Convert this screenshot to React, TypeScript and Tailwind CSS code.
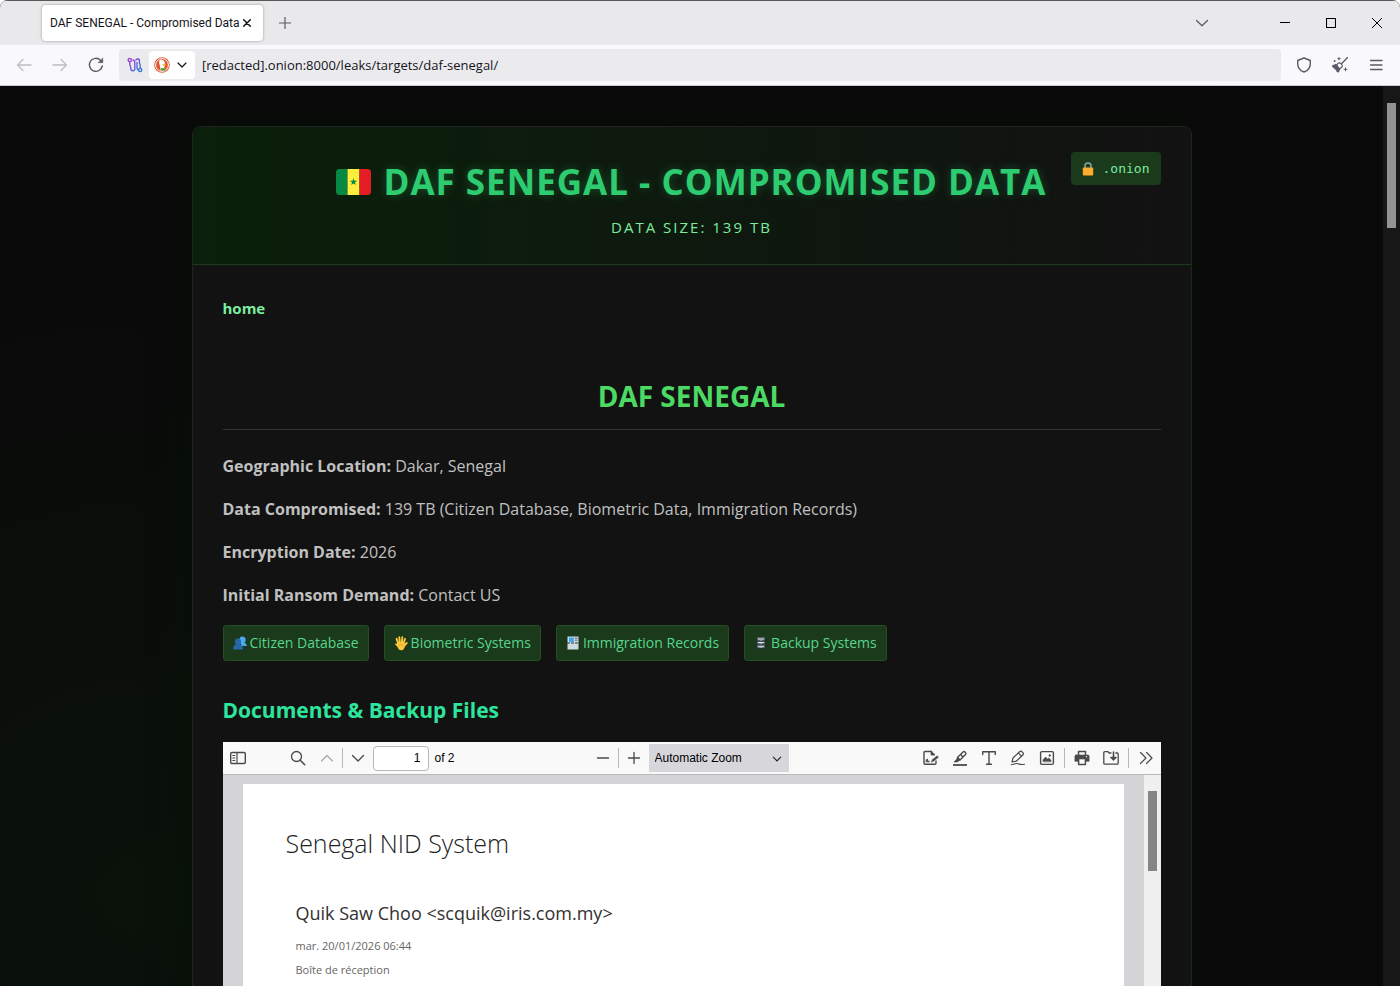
import React from "react";

const ui = "font-['Open_Sans','Noto_Sans',sans-serif]";

type IconProps = { children: React.ReactNode; size?: string; box?: string; className?: string };

function Icon({ children, size = "size-4", box = "0 0 16 16", className = "" }: IconProps) {
  return (
    <svg
      viewBox={box}
      className={`${size} shrink-0 ${className}`}
      fill="none"
      stroke="currentColor"
      strokeWidth="1.2"
      strokeLinecap="round"
      strokeLinejoin="round"
      aria-hidden="true"
    >
      {children}
    </svg>
  );
}

function Flag() {
  return (
    <svg viewBox="0 0 35 26" className="h-[26px] w-[35px] shrink-0" role="img" aria-label="Flag of Senegal">
      <clipPath id="flag">
        <rect width="35" height="26" rx="3.5" />
      </clipPath>
      <g clipPath="url(#flag)">
        <rect width="11.5" height="26" fill="#068a43" />
        <rect x="11.5" width="12" height="26" fill="#fdee3d" />
        <rect x="23.500" width="11.5" height="26" fill="#e41c24" />
        <path d="M17.500 9l.9 2.700h2.800l-2.250 1.700.85 2.700-2.300-1.650-2.300 1.650.85-2.700-2.250-1.700h2.800z" fill="#068a43" />
      </g>
    </svg>
  );
}

function People() {
  return (
    <svg viewBox="0 0 14 14" className="size-3.5 shrink-0" aria-hidden="true">
      <path d="M9.500.5c2 0 3.200 1.300 3.200 3.200 0 1.500-.6 2.500-1.200 3.100 1.300.5 2.300 1.200 2.300 3.200H8.500L6.500 5C6 2.500 7 .5 9.500.5z" fill="#4aa8ee" />
      <path d="M5 2.500c2 0 3 1.200 3 3.100 0 1.300-.5 2.400-1.200 3 2 .6 3.200 1.400 3.200 4.900H.2c0-3.500 1-4.300 2.900-4.900-.7-.6-1.200-1.700-1.200-3C1.900 3.700 3 2.500 5 2.500z" fill="#2668a4" />
    </svg>
  );
}

function Hand() {
  return (
    <svg viewBox="0 0 14 15" className="h-[15px] w-3.5 shrink-0" aria-hidden="true">
      <g stroke="#fdc93c" strokeWidth="1.9" strokeLinecap="round" fill="none">
        <path d="M4.500 8L2.600 2.800M6 7.500L5.300 1.300M7.800 7.500L8.300 1.300M9.300 8L11 3M9.500 10.500L12.700 7" />
      </g>
      <path d="M3.600 6.500h6.600l1 3.500-1.700 3.600c-1 .9-3.500 1-4.600 0L3.300 10.800 1 8.300c.2-1 1-1 1.700-.5z" fill="#fdc93c" />
      <path d="M4.500 9.500c2-1.200 4-1 5.500.5" stroke="#f19020" strokeWidth=".8" fill="none" />
    </svg>
  );
}

function Card() {
  return (
    <svg viewBox="-1 0 14 14" className="size-3.5 shrink-0" aria-hidden="true">
      <rect x=".5" y=".5" width="11" height="13" fill="#cdd8df" />
      <rect x="2" y="1.500" width="5" height="4.500" fill="#46a7ec" />
      <path d="M8 2.200h2.500M8 4.200h2.500" stroke="#54636c" strokeWidth="1" />
      <path d="M0 7h12" stroke="#26343c" strokeWidth="1.200" strokeDasharray="3 1" />
    </svg>
  );
}

function Cabinet() {
  return (
    <svg viewBox="-1 0 14 14" className="size-3.5 shrink-0" aria-hidden="true">
      <path d="M2 1h8v12H2z" fill="#56606c" />
      <path d="M3 2.500h6v1H3zM3 6h6v1H3zM3 9.700h6v1H3z" fill="#dfe6ee" />
      <path d="M2 5h8M2 8.700h8M2 12.500h8" stroke="#252c35" strokeWidth=".9" />
      <path d="M4.500 4.200h3M4.500 7.800h3M4.500 11.500h3" stroke="#a9b5c2" strokeWidth=".8" />
    </svg>
  );
}

function Lock() {
  return (
    <svg viewBox="0 0 12 14" className="h-3.5 w-3 shrink-0" aria-hidden="true">
      <path d="M3 7V4a3 3 0 0 1 6 0v3" fill="none" stroke="#8fa3b0" strokeWidth="1.500" />
      <rect x=".8" y="5.500" width="10.400" height="8" rx="1" fill="#ffab2e" />
    </svg>
  );
}

function TabStrip() {
  return (
    <div className="flex h-[45px] items-center border-t border-[#5c5558] bg-[#e9e9eb] pl-[42px] text-[#15141a]">
      <div className="flex h-9 w-[221px] items-center rounded bg-white pl-2 shadow-[0_0_3px_rgba(0,0,0,0.35)]">
        <span className="whitespace-nowrap font-[Roboto,'Open_Sans',sans-serif] text-[12px]">DAF SENEGAL - Compromised Data</span>
        <button type="button" aria-label="Close tab" className="ml-auto mr-3">
          <Icon size="size-2" box="0 0 8 8">
            <path d="M.7.700l6.600 6.600M7.300.7L.7 7.300" strokeWidth="1.500" />
          </Icon>
        </button>
      </div>
      <button type="button" aria-label="New tab" className="ml-4 text-[#5b5b66]">
        <Icon size="size-3" box="0 0 12 12">
          <path d="M6 .5v11M.5 6h11" />
        </Icon>
      </button>
      <div className="ml-auto flex items-center">
        <button type="button" aria-label="List all tabs" className="mr-[72px] text-[#5b5b66]">
          <Icon size="size-3" box="0 0 12 12">
            <path d="M.5 3.500L6 8.800l5.500-5.300" strokeWidth="1.300" />
          </Icon>
        </button>
        <div className="flex gap-9 pr-[18px] text-black">
          <button type="button" aria-label="Minimize">
            <Icon size="size-2.5" box="0 0 10 10">
              <path d="M0 4.500h10" strokeWidth="1" />
            </Icon>
          </button>
          <button type="button" aria-label="Maximize">
            <Icon size="size-2.5" box="0 0 10 10">
              <path d="M.5.500h9v9h-9z" strokeWidth="1.100" strokeLinejoin="miter" />
            </Icon>
          </button>
          <button type="button" aria-label="Close">
            <Icon size="size-2.5" box="0 0 10 10">
              <path d="M.3.300l9.400 9.400M9.700.3L.3 9.700" strokeWidth="1" />
            </Icon>
          </button>
        </div>
      </div>
    </div>
  );
}

function NavBar() {
  return (
    <div className="flex h-[41px] items-center border-b border-[#cccccf] bg-[#f9f9fb] px-4 text-[#5b5b66]">
      <div className="flex items-center gap-5">
        <button type="button" aria-label="Back" className="text-[#bdbdc2]">
          <Icon>
            <path d="M15 8H1.500M7 2.500L1.500 8 7 13.500" strokeWidth="1.300" />
          </Icon>
        </button>
        <button type="button" aria-label="Forward" className="text-[#bdbdc2]">
          <Icon>
            <path d="M1 8h13.500M9 2.500L14.500 8 9 13.500" strokeWidth="1.300" />
          </Icon>
        </button>
        <button type="button" aria-label="Reload">
          <Icon>
            <path d="M14.300 9A6.500 6.500 0 1 1 12.500 3.200L14 4.700" strokeWidth="1.400" />
            <path d="M14.800 1.200v4.500h-4.500z" fill="currentColor" strokeWidth=".5" />
          </Icon>
        </button>
      </div>
      <div className="ml-[15px] flex h-8 min-w-0 flex-1 items-center rounded bg-[#ebebee]">
        <button type="button" aria-label="Circuit" className="ml-2">
          <svg viewBox="0 0 16 16" className="size-4" fill="none" strokeWidth="1.400" aria-hidden="true">
            <defs>
              <linearGradient id="circuit" gradientUnits="userSpaceOnUse" x1="1" y1="1" x2="15" y2="15">
                <stop offset="0" stopColor="#b833e1" />
                <stop offset="1" stopColor="#1b86d0" />
              </linearGradient>
            </defs>
            <g stroke="url(#circuit)">
              <circle cx="2.800" cy="3" r="1.600" />
              <circle cx="13.200" cy="13" r="1.600" />
              <path d="M2.800 4.600v2.600c0 1.500 1 2 1 3.300v1.300a2 2 0 0 0 4 0V5.500c0-1.700-.8-2.500-2.300-2.500" />
              <path d="M13.200 11.400V8.800c0-1.500-.8-2-.8-3.300V4.200a1.800 1.800 0 0 0-3.600-.7" />
              <path d="M10 5v5.500c0 1.500.5 2.300 1.500 2.500" />
            </g>
          </svg>
        </button>
        <button type="button" aria-label="Search engine" className="ml-1.5 flex h-7 w-[46px] items-center gap-[7px] rounded-sm bg-white pl-[5px]">
          <svg viewBox="0 0 16 16" className="size-4" aria-hidden="true">
            <circle cx="8" cy="8" r="7.800" fill="#de5833" />
            <circle cx="8" cy="8" r="6.400" fill="none" stroke="#fff" strokeWidth="1" />
            <path d="M6 3c2.500-.8 5 .7 4.800 3.500L10 13.800 7 14 5.300 6.500C5 5 5 3.500 6 3z" fill="#fff" />
            <path d="M8.500 7.300c1.500-.5 3-.3 3.500.2s-1.500 1.200-3.300 1.200z" fill="#fdb62f" />
            <path d="M7 11l4 .300-.5 2.300L7.500 14z" fill="#3ca82b" />
          </svg>
          <Icon size="size-2.5" box="0 0 10 10" className="text-[#15141a]">
            <path d="M1 3l4 4 4-4" />
          </Icon>
        </button>
        <input
          aria-label="Address"
          readOnly
          value="[redacted].onion:8000/leaks/targets/daf-senegal/"
          className="min-w-0 flex-1 bg-transparent pl-[7px] pt-0.5 text-[13px] text-[#15141a] outline-none"
        />
      </div>
      <div className="ml-[15px] flex items-center gap-5">
        <button type="button" aria-label="Security level">
          <Icon>
            <path d="M8 1l6.300 2.500v3.200c0 3.800-2.600 7-6.300 8.300-3.700-1.300-6.300-4.500-6.300-8.300V3.500z" strokeWidth="1.400" />
          </Icon>
        </button>
        <button type="button" aria-label="New identity">
          <Icon>
            <path d="M15.500.5L9.500 6.700" strokeWidth="1.300" />
            <path d="M6.500 6c1.500-.8 4.700 1.800 3.700 3.800L7.500 12 4 8.700z" />
            <path d="M4 7.500L.5 8.800l1 1.500 1.200.2.300 1.500 1.500.3.500 2 1.500.7 1-3.200z" fill="currentColor" />
            <path d="M7 .5v2.400M5.800 1.700h2.400M2 4h1.200M2.600 3.400v1.200M13.500 10.800v3M12 12.300h3" strokeWidth="1" />
          </Icon>
        </button>
        <button type="button" aria-label="Menu">
          <Icon>
            <path d="M2.500 3.500h11.500M2.500 8h11.500M2.500 12.500h11.500" strokeWidth="1.300" />
          </Icon>
        </button>
      </div>
    </div>
  );
}

const facts = [
  ["Geographic Location:", "Dakar, Senegal"],
  ["Data Compromised:", "139 TB (Citizen Database, Biometric Data, Immigration Records)"],
  ["Encryption Date:", "2026"],
  ["Initial Ransom Demand:", "Contact US"],
];

const tags = [
  { label: "Citizen Database", icon: <People /> },
  { label: "Biometric Systems", icon: <Hand /> },
  { label: "Immigration Records", icon: <Card /> },
  { label: "Backup Systems", icon: <Cabinet /> },
];

function Divider() {
  return <span className="h-5 w-px bg-[#b8b8b8]" />;
}

function ViewerToolbar() {
  return (
    <div className="flex h-[33px] items-center border-b border-[#b8b8b8] bg-[#f9f9fa] font-['Liberation_Sans',Arial,sans-serif] text-[12px] text-black">
      <div className="flex flex-1 items-center text-[#4a4a4a]">
        <button type="button" aria-label="Toggle sidebar" className="ml-[7px]">
          <Icon>
            <rect x=".7" y="2.500" width="14.600" height="11" rx="1.200" strokeWidth="1.400" />
            <path d="M7 2.500v11M2.800 5.500h2M2.800 8h2M2.800 10.500h2" strokeWidth="1.200" />
          </Icon>
        </button>
        <button type="button" aria-label="Find" className="ml-11">
          <Icon>
            <circle cx="6.500" cy="6.500" r="5" strokeWidth="1.300" />
            <path d="M10.200 10.200l4.500 4.500" strokeWidth="1.500" />
          </Icon>
        </button>
        <button type="button" aria-label="Previous page" className="ml-[13px] text-[#a8a8a8]">
          <Icon>
            <path d="M2.500 11L8 5.500l5.500 5.500" />
          </Icon>
        </button>
        <span className="mx-[7px] flex">
          <Divider />
        </span>
        <button type="button" aria-label="Next page">
          <Icon>
            <path d="M2.500 5.500L8 11l5.500-5.500" strokeWidth="1.400" />
          </Icon>
        </button>
        <input
          aria-label="Page"
          defaultValue="1"
          className="ml-[7px] h-[25px] w-14 rounded-sm border border-[#b8b8b8] bg-white pr-[7px] text-right text-black"
        />
        <span className="ml-1.5 text-black">of 2</span>
      </div>
      <div className="flex items-center pl-[7px] text-[#4a4a4a]">
        <button type="button" aria-label="Zoom out">
          <Icon>
            <path d="M2.500 8h11" strokeWidth="1.300" />
          </Icon>
        </button>
        <span className="mx-[7px] flex">
          <Divider />
        </span>
        <button type="button" aria-label="Zoom in">
          <Icon>
            <path d="M2.500 8h11M8 2.500v11" strokeWidth="1.300" />
          </Icon>
        </button>
        <div className="relative ml-[7px]">
          <select
            aria-label="Zoom"
            className="h-7 w-[140px] appearance-none bg-[#d7d7db] pl-1.5 text-black outline-none"
          >
            <option>Automatic Zoom</option>
          </select>
          <Icon size="size-2.5" box="0 0 10 10" className="pointer-events-none absolute right-[7px] top-[10px] text-[#222]">
            <path d="M1.300 3.200L5 6.900l3.700-3.700" />
          </Icon>
        </div>
      </div>
      <div className="flex flex-1 items-center justify-end gap-[9px] pr-[7px] text-[#4a4a4a]">
        <div className="flex items-center gap-[13px]">
          <button type="button" aria-label="Add signature">
            <Icon>
              <path d="M13 11v2.200a1 1 0 0 1-1 1H2a1 1 0 0 1-1-1V2.500a1 1 0 0 1 1-1h6.500v3h2.700" strokeWidth="1.400" />
              <path d="M8.500 1.200L12 5H8.500z" fill="currentColor" strokeWidth=".5" />
              <path d="M8.500 12l.6-2.200 5-4 1.400 1.500-5 4z" fill="currentColor" strokeWidth=".4" />
              <path d="M3 11.700c1-3 1.600-3 1.600-1s.9 1.200 1.600.6" />
            </Icon>
          </button>
          <button type="button" aria-label="Highlight">
            <Icon>
              <path d="M1 15h14" strokeWidth="1.800" strokeLinecap="butt" />
              <path d="M5.500 7.500L11 1.900a1.300 1.300 0 0 1 1.900 0l.6.600a1.300 1.300 0 0 1 0 1.900L8 10zM8.500 4.600l2.500 2.500" strokeWidth="1.400" />
              <path d="M5.500 7.500L4.300 9.500 2 12h3.500l.8-.8L8 10z" fill="currentColor" strokeWidth=".6" />
            </Icon>
          </button>
          <button type="button" aria-label="Text">
            <Icon>
              <path d="M1.700 4.500V1.700h12.600v2.800M8 1.700v12.600M5.500 14.300h5" strokeWidth="1.400" />
            </Icon>
          </button>
          <button type="button" aria-label="Draw">
            <Icon>
              <path d="M2 12l1-4L9.800 1.500a1.300 1.300 0 0 1 1.900 0l1.300 1.300a1.300 1.300 0 0 1 0 1.900L6.300 11.200zM8.500 3.200l3 3" />
              <path d="M1.200 14.800c2.500-.2 4-1.800 6-1.300s3 1.500 7.300.7" strokeWidth="1.100" />
            </Icon>
          </button>
          <button type="button" aria-label="Add image">
            <Icon>
              <rect x="1.600" y="1.600" width="12.800" height="12.800" rx="1.300" strokeWidth="1.400" />
              <path d="M4 11.500V9.700L6.500 7l2 2 1.200-1 2.300 2v1.500z" fill="currentColor" strokeWidth=".5" />
              <circle cx="10.700" cy="5.500" r=".9" fill="currentColor" strokeWidth=".4" />
            </Icon>
          </button>
        </div>
        <Divider />
        <div className="flex items-center gap-[13px]">
          <button type="button" aria-label="Print">
            <Icon>
              <path d="M4.500 5V1.500h7V5" strokeWidth="1.500" />
              <path d="M2.200 5h11.600a1.300 1.300 0 0 1 1.300 1.300v5h-3.500V9H4.400v2.300H.9v-5A1.300 1.300 0 0 1 2.200 5z" fill="currentColor" strokeWidth=".6" />
              <path d="M4.600 9.500v5h6.800v-5" strokeWidth="1.500" />
              <circle cx="12.500" cy="6.800" r=".7" fill="#f9f9fa" stroke="none" />
            </Icon>
          </button>
          <button type="button" aria-label="Save">
            <Icon>
              <path d="M8 3H6.200L5 1.700H1.800a1 1 0 0 0-1 1v10.500a1 1 0 0 0 1 1h12.400a1 1 0 0 0 1-1V4a1 1 0 0 0-1-1h-1.400" strokeWidth="1.300" />
              <path d="M10.500 2v6.500" strokeWidth="1.600" />
              <path d="M7.800 7.300L10.500 10l2.700-2.700z" fill="currentColor" />
            </Icon>
          </button>
        </div>
        <Divider />
        <button type="button" aria-label="Tools">
          <Icon>
            <path d="M2.500 2.500L8 8l-5.500 5.500M8.500 2.500L14 8l-5.500 5.500" />
          </Icon>
        </button>
      </div>
    </div>
  );
}

function Viewer() {
  return (
    <div>
      <ViewerToolbar />
      <div className="flex bg-[#d4d4d7] text-[#323130]">
        <div className="min-w-0 flex-1 px-5 pt-[9px]">
          <div className="bg-white px-[43px] pb-32 pt-[39px]">
            <h4 className="text-[25px] font-light leading-10 text-[#222]">Senegal NID System</h4>
            <div className="px-2.5 pt-9">
              <div className="text-[18px] leading-7">Quik Saw Choo &lt;scquik@iris.com.my&gt;</div>
              <div className="mt-[7px] text-[11px] leading-6 text-[#666]">mar. 20/01/2026 06:44</div>
              <div className="text-[11px] leading-6 text-[#666]">Boîte de réception</div>
            </div>
          </div>
        </div>
        <div className="w-[17px] bg-[#f0f0f0] px-1 pt-4">
          <div className="h-20 bg-[#858585]" />
        </div>
      </div>
    </div>
  );
}

export default function App() {
  return (
    <div className={`flex h-screen flex-col overflow-hidden rounded-t-lg bg-[#0a0a0a] ${ui}`}>
      <TabStrip />
      <NavBar />
      <div className="flex min-h-0 flex-1">
        <div className="min-w-0 flex-1 overflow-hidden bg-[radial-gradient(circle_at_10%_90%,#0a120a_0%,#0a0a0a_40%)] px-6 pt-10">
          <main className="mx-auto max-w-[1000px] overflow-hidden rounded-lg border border-[#222] bg-[#121212] shadow-[0_0_40px_rgba(0,20,0,0.5)]">
            <header className="relative border-b border-[#1b3a1b] bg-[linear-gradient(90deg,#0a200a,#121212)] px-[30px] pb-[25px] pt-[27px] text-center">
              <h1 className="flex items-center justify-center gap-3 text-[35px] font-bold leading-[56px] tracking-[1px] text-[#2ecc71] [text-shadow:0_0_10px_rgba(46,204,113,0.3)]">
                <Flag />
                DAF SENEGAL - COMPROMISED DATA
              </h1>
              <p className="mt-[5px] text-[15px] leading-6 tracking-[2px] text-[#7bed9f]">DATA SIZE: 139 TB</p>
              <div className="absolute right-[30px] top-[25px] flex h-[33px] items-center gap-[9px] rounded bg-[#1b3a1b] px-[11px] font-['DejaVu_Sans_Mono',monospace] text-[13px] text-[#7bed9f]">
                <Lock />
                .onion
              </div>
            </header>
            <div className="px-[30px] pb-[30px] pt-[29px] text-[16px] leading-7 text-[#c0c0c0]">
              <a href="#home" className="block w-fit text-[15px] font-bold text-[#7bed9f]">
                home
              </a>
              <h2 className="mt-[52px] border-b border-[#333] pb-[11px] text-center text-[28px] font-bold leading-[44px] text-[#4cd964]">
                DAF SENEGAL
              </h2>
              <div className="mt-[22px] flex flex-col gap-[15px]">
                {facts.map(([label, value]) => (
                  <p key={label}>
                    <strong>{label}</strong> {value}
                  </p>
                ))}
              </div>
              <div className="mt-4 flex flex-wrap gap-[15px]">
                {tags.map((t) => (
                  <span
                    key={t.label}
                    className="flex h-9 items-center gap-[3px] rounded-[3px] border border-[#234f23] bg-[#1b3a1b] px-[9px] text-[14px] text-[#58d68d]"
                  >
                    {t.icon}
                    {t.label}
                  </span>
                ))}
              </div>
              <h3 className="mb-4 mt-[33px] text-[21px] font-bold leading-8 text-[#2ee59d]">Documents &amp; Backup Files</h3>
              <Viewer />
            </div>
          </main>
        </div>
        <div className="w-[17px] bg-[#171717] px-1 pt-[17px]">
          <div className="h-[125px] bg-[#939393]" />
        </div>
      </div>
    </div>
  );
}
